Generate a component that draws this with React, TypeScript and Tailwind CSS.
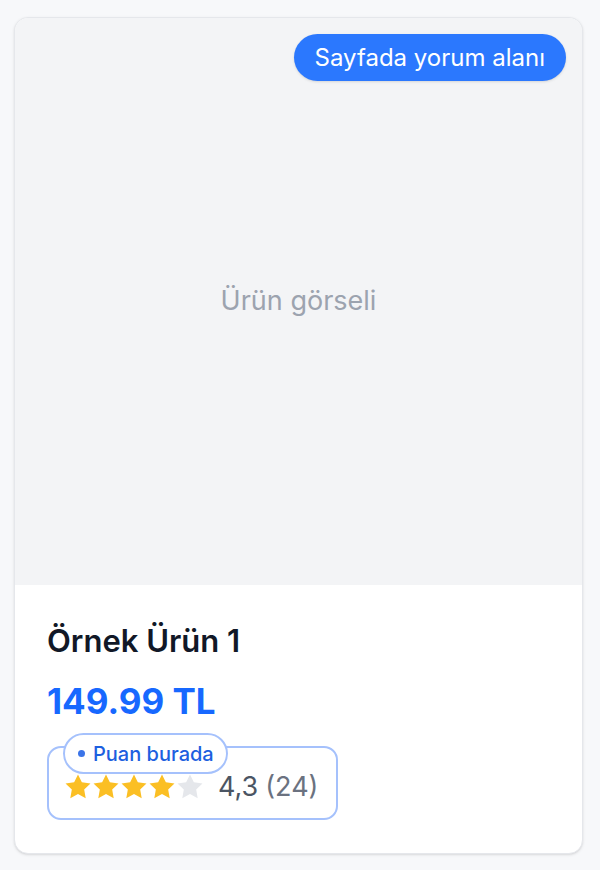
import React from 'react';

const Star = ({ filled }: { filled: boolean }) => (
  <svg viewBox="0 0 24 24" className={`w-[28px] h-[28px] ${filled ? 'text-[#fbbf24]' : 'text-[#e5e7eb]'}`} fill="currentColor">
    <path d="M12 1.2l3.3 6.8 7.4 1-5.4 5.2 1.3 7.4L12 18.1l-6.6 3.5 1.3-7.4L1.3 9l7.4-1z" />
  </svg>
);

export default function App() {
  const rating = 4;
  return (
    <div className="min-h-[870px] w-[600px] bg-[#f7f8fa] pt-[17px] pl-[14px] font-['Inter',sans-serif]">
      <div className="w-[569px] h-[837px] bg-white rounded-[14px] border border-[#e5e7eb] shadow-sm overflow-hidden flex flex-col">
        {/* product image */}
        <div className="relative h-[567px] bg-[#f3f4f6] flex items-center justify-center">
          <span className="text-[27px] text-[#9ca3af]">Ürün görseli</span>
          <div className="absolute top-[16px] right-[16px] h-[47px] px-[21px] rounded-full bg-[#2b78fe] text-white text-[24px] flex items-center shadow-sm">
            Sayfada yorum alanı
          </div>
        </div>

        <div className="px-[32px] pt-[38px]">
          <h2 className="text-[31px] leading-[36px] font-semibold text-[#111827]">Örnek Ürün 1</h2>
          <div className="mt-[22px] text-[35px] leading-[40px] font-bold text-[#1768ff]">149.99 TL</div>

          <div className="relative mt-[25px] w-[291px] h-[74px] rounded-[14px] border-2 border-[#a5c1fc] flex items-end pb-[17px] pl-[15px]">
            <div className="absolute -top-[15px] left-[14px] h-[41px] pl-[13px] pr-[12px] rounded-full border-2 border-[#a5c1fc] bg-white flex items-center gap-[8px] text-[#1d5fe0] text-[20px] font-medium">
              <span className="w-[7px] h-[7px] rounded-full bg-[#3b74e8]" />
              Puan burada
            </div>
            <div className="flex items-center">
              {[1, 2, 3, 4, 5].map((i) => (
                <Star key={i} filled={i <= rating} />
              ))}
              <span className="ml-[14px] text-[27px] leading-[28px] text-[#4b5563]">4,3</span>
              <span className="ml-[7px] text-[27px] leading-[28px] text-[#6b7280]">(24)</span>
            </div>
          </div>
        </div>
      </div>
    </div>
  );
}
